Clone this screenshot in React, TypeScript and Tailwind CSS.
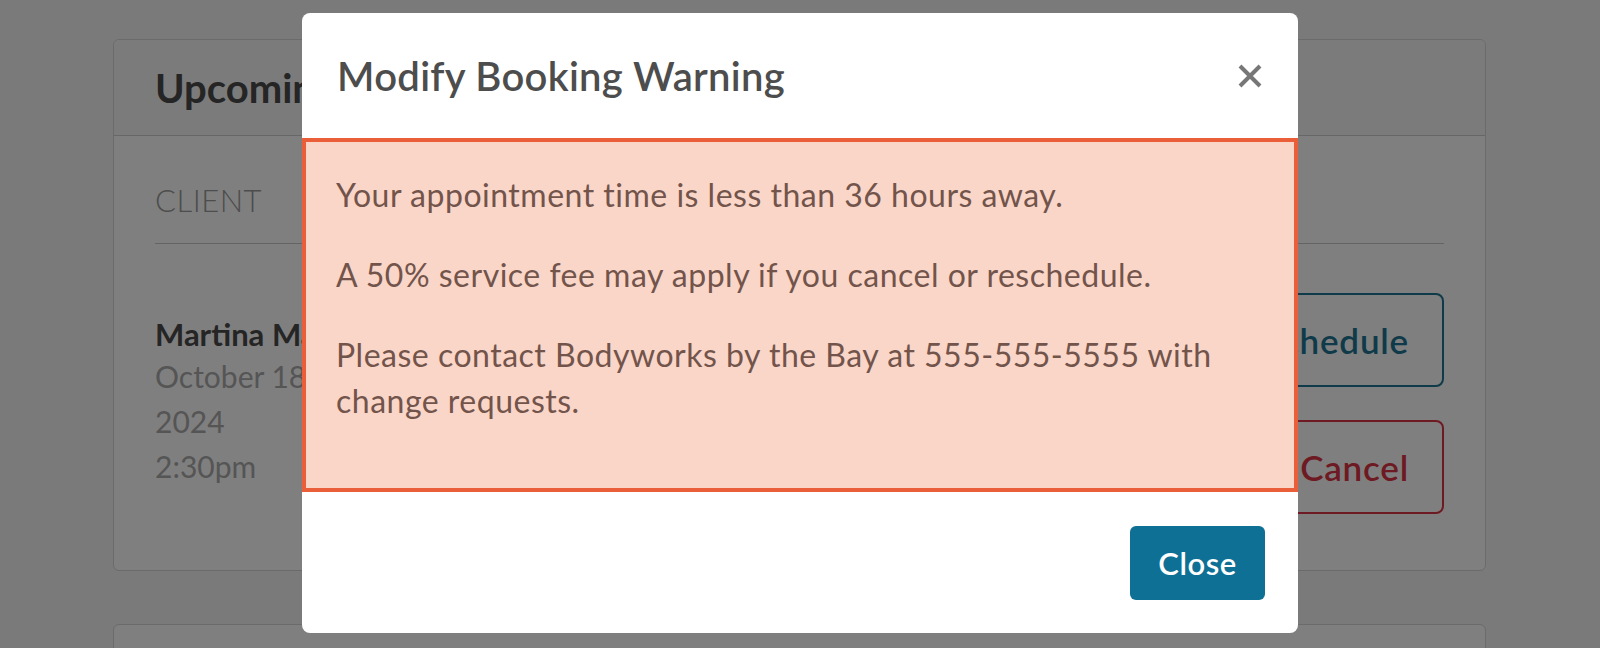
export default function App() {
  return (
    <div className="relative h-[648px] overflow-hidden bg-[#f4f4f4] font-['Lato',sans-serif]">
      {/* Page behind the dialog */}
      <div className="pl-[113px] pr-[114px] pt-[39px]">
        <div className="rounded-[6px] border border-[#d6d6d6] bg-white">
          <div className="flex h-[96px] items-center rounded-t-[6px] border-b border-[#cfcfcf] bg-[#f7f7f7] px-[41px]">
            <h2 className="text-[40px] font-bold text-[#4a4a4a]">Upcoming Appointments</h2>
          </div>

          <div className="px-[41px] pt-[41px] pb-[56px]">
            <div className="border-b border-[#c8c8c8] pb-[20px] text-[31px] leading-[46px] font-light tracking-[0.5px] text-[#9a9a9a]">
              CLIENT
            </div>

            <div className="flex items-start justify-between pt-[49px]">
              <div className="pt-[21px]">
                <div className="text-[31px] leading-[40px] font-bold text-[#4a4a4a]">Martina Martinez</div>
                <div className="text-[30px] leading-[45px] text-[#ababab]">October 18</div>
                <div className="text-[30px] leading-[45px] text-[#ababab]">2024</div>
                <div className="text-[30px] leading-[45px] text-[#ababab]">2:30pm</div>
              </div>

              <div className="flex flex-col items-end gap-[33px]">
                <button className="h-[94px] rounded-[8px] border-2 border-[#1f7592] px-[33px] text-[35px] font-semibold tracking-[0.8px] text-[#1f7592]">
                  Reschedule
                </button>
                <button className="h-[94px] rounded-[8px] border-2 border-[#dc3545] px-[33px] text-[35px] font-semibold tracking-[0.8px] text-[#dc3545]">
                  Cancel
                </button>
              </div>
            </div>
          </div>
        </div>

        <div className="mt-[53px] h-[200px] rounded-[6px] border border-[#d6d6d6] bg-white" />
      </div>

      {/* Overlay + dialog */}
      <div className="absolute inset-0 flex justify-center bg-black/50 pt-[13px]">
        <div className="h-fit w-[996px] rounded-[8px] bg-white">
          <div className="flex h-[125px] items-center justify-between pl-[35px] pr-[36px]">
            <h3 className="text-[40px] font-semibold tracking-[0.3px] text-[#4d4d4d]">Modify Booking Warning</h3>
            <button className="text-[#777777]" aria-label="Close">
              <svg className="h-[24px] w-[24px]" viewBox="0 0 24 24" fill="none" stroke="currentColor" strokeWidth={4}>
                <path d="M2 2l20 20M22 2L2 22" />
              </svg>
            </button>
          </div>

          <div className="border-4 border-[#ea5f3a] bg-[#fad6c9] px-[30px] pt-[30px] pb-[30px] text-[32px] leading-[46px] tracking-[0.5px] text-[#72544b]">
            <p className="mb-[34px]">Your appointment time is less than 36 hours away.</p>
            <p className="mb-[34px]">A 50% service fee may apply if you cancel or reschedule.</p>
            <p className="mb-[34px]">Please contact Bodyworks by the Bay at 555-555-5555 with change requests.</p>
          </div>

          <div className="flex justify-end pt-[34px] pr-[33px] pb-[33px]">
            <button className="h-[74px] w-[135px] rounded-[6px] bg-[#0e7094] text-[31px] font-semibold tracking-[0.5px] text-white">
              Close
            </button>
          </div>
        </div>
      </div>
    </div>
  )
}
